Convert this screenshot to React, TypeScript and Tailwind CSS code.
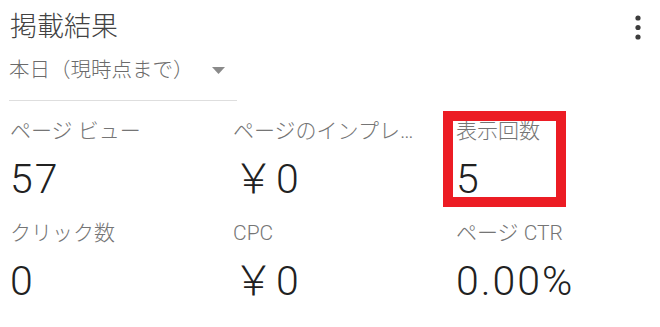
const stats = [
	{ label: 'ページ ビュー', value: '57' },
	{ label: 'ページのインプレッション収益', value: '￥0' },
	{ label: '表示回数', value: '5' },
	{ label: 'クリック数', value: '0' },
	{ label: 'CPC', value: '￥0' },
	{ label: 'ページ CTR', value: '0.00%' },
]

export default function App() {
	return (
		<div
			className="relative w-[660px] h-[327px] overflow-hidden bg-white font-light"
			style={{ fontFamily: 'Roboto, "Noto Sans CJK JP", sans-serif' }}>
			<div className="flex items-start justify-between pl-[10px] pr-[19px] pt-[10px]">
				<h1 className="text-[27px] leading-[35px] text-[#424242]">掲載結果</h1>
				<svg width="6" height="26" viewBox="0 0 6 26" className="mt-[5px]" fill="#3c3c3c">
					<circle cx="3" cy="3" r="2.6" />
					<circle cx="3" cy="12.5" r="2.6" />
					<circle cx="3" cy="22" r="2.6" />
				</svg>
			</div>

			<div className="ml-[9px] mt-[10px] flex h-[46px] w-[228px] items-start border-b border-[#dedede]">
				<span className="text-[20.5px] leading-[30px] text-[#6b6b6b]">本日（現時点まで）</span>
				<svg width="13" height="7" viewBox="0 0 13 7" className="ml-auto mr-[12px] mt-[12px]" fill="#8a8a8a">
					<path d="M0 0h13L6.5 7z" />
				</svg>
			</div>

			<div className="mt-[16px] grid grid-cols-[223px_223px_1fr] gap-y-[16px] pl-[10px]">
				{stats.map(s => (
					<div key={s.label} className="pr-[36px]">
						<div className="truncate text-[21px] leading-[28px] text-[#757575]">{s.label}</div>
						<div className="mt-[10px] text-[41px] leading-[48px] tracking-[2px] text-[#212121]">{s.value}</div>
					</div>
				))}
			</div>

			<div className="absolute left-[443px] top-[111px] h-[96px] w-[123px] border-[10px] border-[#ec1c24]" />
		</div>
	)
}
